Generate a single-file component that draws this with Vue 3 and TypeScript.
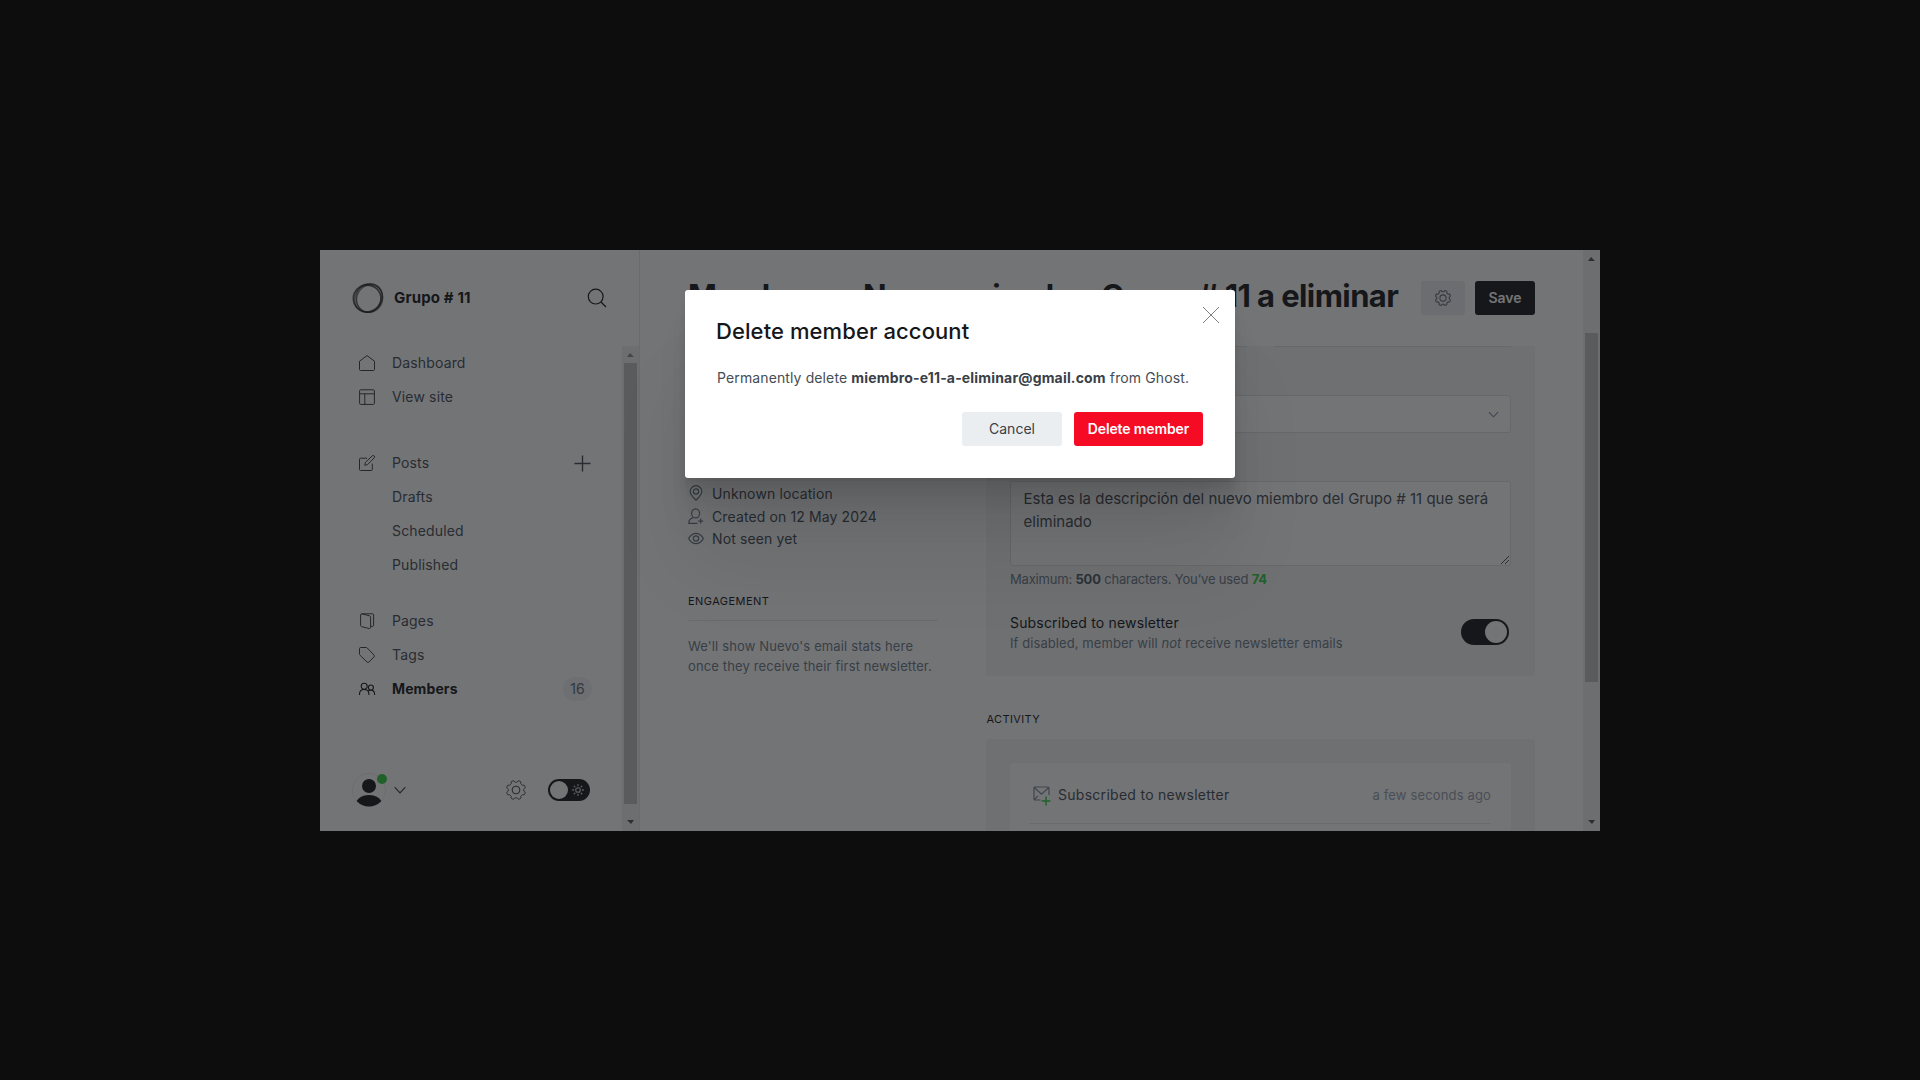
<script setup lang="ts">
interface NavItem { label: string; icon?: string; active?: boolean; plus?: boolean; badge?: string }
const groups: NavItem[][] = [
  [{ label: 'Dashboard', icon: 'home' }, { label: 'View site', icon: 'site' }],
  [{ label: 'Posts', icon: 'posts', plus: true }, { label: 'Drafts' }, { label: 'Scheduled' }, { label: 'Published' }],
  [{ label: 'Pages', icon: 'pages' }, { label: 'Tags', icon: 'tags' }, { label: 'Members', icon: 'members', active: true, badge: '16' }],
]
const icons: Record<string, string> = {
  home: 'M.5 6.2v8.3c0 .6.4 1 1 1h13c.6 0 1-.4 1-1V6.2L8 .6z',
  site: 'M1.5.8h13c.5 0 .9.4.9.9v12.8c0 .5-.4.9-.9.9h-13a.9.9 0 0 1-.9-.9V1.7c0-.5.4-.9.9-.9zM.6 4.8h14.8M5.8 4.8v10.6',
  posts: 'M8 3.2H1.5a1 1 0 0 0-1 1v10.3a1 1 0 0 0 1 1h10.8a1 1 0 0 0 1-1V8.6M5.8 10.3l.6-2.9L13.2.9a1.4 1.4 0 0 1 2 2L8.6 9.6z',
  pages: 'M2.8.8h10.6c.7 0 1.2.5 1.2 1.2v10.2c0 .7-.5 1.2-1.2 1.2h-1.6M2.8.8c-.8 0-1.2.5-1.2 1.2v10.4c0 .6.3 1 .9 1.2l7.5 1.9c.9.2 1.6-.2 1.6-1.1V4.2c0-.7-.4-1.2-1.1-1.4z',
  tags: 'M1.6.5h5.5c.5 0 .9.2 1.2.5l6.700 7.100a1.300 1.300 0 0 1 0 1.800l-5.100 5.200a1.300 1.300 0 0 1-1.800 0L1.100 8.300a2 2 0 0 1-.6-1.400V1.600c0-.6.5-1.100 1.100-1.100z',
  members: 'M5.200 8.300a3 3 0 1 0 0-6 3 3 0 0 0 0 6zM.5 14v-.8C.5 10.400 2.500 8.500 5.200 8.500s4.700 1.900 4.700 4.700v.8M11.900 9a2.500 2.500 0 1 0 0-5 2.500 2.500 0 0 0 0 5zM9.400 9.900c.6-.5 1.500-.8 2.400-.8 2.200 0 3.800 1.600 3.800 4.300v.6',
}
const gear = (() => {
  const pts: string[] = []
  const n = 160
  for (let i = 0; i < n; i++) {
    const a = (i / n) * Math.PI * 2
    const k = Math.tanh(2.6 * Math.cos(8 * a + Math.PI))
    const r = 8.7 + 0.95 * k
    pts.push(`${(10 + r * Math.cos(a)).toFixed(2)} ${(10 + r * Math.sin(a)).toFixed(2)}`)
  }
  return `M${pts.join('L')}Z`
})()
const rays = Array.from({ length: 8 }, (_, i) => i * 45)
</script>

<template>
  <div class="stage">
    <div class="window">
      <aside class="sidebar">
        <header class="brand">
          <svg class="logo" viewBox="0 0 32 32" fill="none" stroke="#15171a">
            <ellipse cx="15.200" cy="16.600" rx="13.800" ry="13.600" stroke-width="1.800" opacity=".7" />
            <ellipse cx="17.600" cy="15.600" rx="12.600" ry="14.200" stroke-width="1.300" opacity=".55" transform="rotate(30 16 16)" />
            <ellipse cx="16.400" cy="16.200" rx="14.900" ry="12.800" stroke-width="1.500" opacity=".45" transform="rotate(-50 16 16)" />
            <ellipse cx="17.400" cy="16" rx="13.300" ry="14.400" stroke-width="1.300" opacity=".4" />
          </svg>
          <b>Grupo # 11</b>
          <svg class="search" viewBox="0 0 20 20" fill="none" stroke="#15171a" stroke-width="1.200"><circle cx="8.700" cy="8.600" r="7.400" /><path d="M14 14l5 5" /></svg>
        </header>
        <div class="side-body">
          <div class="side-main">
            <nav>
              <ul v-for="(g, gi) in groups" :key="gi">
                <li v-for="it in g" :key="it.label" :class="{ active: it.active }">
                  <span class="ico"><svg v-if="it.icon" viewBox="0 0 16 16"><path :d="icons[it.icon]" /></svg></span>
                  <span class="label">{{ it.label }}</span>
                  <svg v-if="it.plus" class="plus" viewBox="0 0 18 18"><path d="M9 .5v17M.5 9h17" /></svg>
                  <span v-if="it.badge" class="badge">{{ it.badge }}</span>
                </li>
              </ul>
            </nav>
            <footer class="foot">
              <div class="me">
                <svg viewBox="0 0 34 34"><defs><clipPath id="me"><circle cx="17" cy="17" r="16.500" /></clipPath></defs><circle cx="17" cy="17" r="16.500" fill="#fff" stroke="#e6e9eb" stroke-width=".8" /><g clip-path="url(#me)" fill="#15171a"><circle cx="17" cy="13" r="7" /><ellipse cx="17" cy="33" rx="14" ry="11" /></g></svg>
                <i class="dot"></i>
              </div>
              <svg class="chev" viewBox="0 0 12 8"><path d="M.6 1.200L6 6.800l5.400-5.600" /></svg>
              <svg class="gear" viewBox="0 0 20 20"><path :d="gear" /><circle cx="10" cy="10" r="3.900" /></svg>
              <div class="night">
                <i></i>
                <svg viewBox="0 0 12 12" fill="none" stroke="#fff" stroke-linecap="round"><circle cx="6" cy="6" r="2.300" stroke-width="1.100" /><path v-for="r in rays" :key="r" d="M6 .7v.9" stroke-width="1.300" :transform="`rotate(${r} 6 6)`" /></svg>
              </div>
            </footer>
          </div>
          <div class="bar side-bar"><i class="arr up off"></i><i class="thumb"></i><i class="arr down"></i></div>
        </div>
      </aside>

      <main>
        <header class="top">
          <h1><span>Member</span>Nuevo miembro Grupo # 11 a eliminar</h1>
          <button class="cog"><svg viewBox="0 0 20 20"><path :d="gear" /><circle cx="10" cy="10" r="3.900" /></svg></button>
          <button class="save">Save</button>
        </header>
        <div class="cols">
          <section class="info">
            <div class="avatar-row"><div class="avatar"></div></div>
            <p><svg viewBox="0 0 16 16"><path d="M8 15.200C5 12.200 2.200 9.700 2.200 6.400a5.800 5.800 0 0 1 11.600 0c0 3.300-2.800 5.800-5.800 8.800z" /><circle cx="8" cy="6.500" r="2.600" /></svg>Unknown location</p>
            <p><svg viewBox="0 0 16 16"><path d="M9.500 15.400H.8c0-3.600 1-4.900 4.200-5.800M9.300 9.400l1 .4M12.700 10.600v5M10.200 13.100h5" /><ellipse cx="7.600" cy="5.400" rx="4" ry="4.500" /></svg>Created on 12 May 2024</p>
            <p><svg viewBox="0 0 16 16"><path d="M.6 8.500C2.300 5.500 4.900 3.300 8 3.300s5.700 2.200 7.400 5.200c-1.700 3-4.300 5.200-7.400 5.200S2.300 11.500.6 8.500z" /><circle cx="8" cy="8.500" r="2.600" /></svg>Not seen yet</p>
            <h4>Engagement</h4>
            <div class="stats">We'll show Nuevo's email stats here<br>once they receive their first newsletter.</div>
          </section>
          <section class="details">
            <div class="panel">
              <div class="inputs"><i></i><i></i></div>
              <div class="select"><svg viewBox="0 0 12 8"><path d="M.8 1.200L6 6.600l5.200-5.400" /></svg></div>
              <div class="area">Esta es la descripción del nuevo miembro del Grupo # 11 que será eliminado
                <svg viewBox="0 0 8 8"><path d="M0 8L8 0M4 8l4-4" /></svg>
              </div>
              <div class="hint">Maximum: <b>500</b> characters. You’ve used <b class="ok">74</b></div>
              <div class="sub">
                <div><strong>Subscribed to newsletter</strong><span>If disabled, member will <em>not</em> receive newsletter emails</span></div>
                <div class="switch"><i></i></div>
              </div>
            </div>
            <h4>Activity</h4>
            <div class="panel feed">
              <div class="card">
                <div class="event">
                  <svg viewBox="0 0 18 20"><path d="M7.500 14H2a1 1 0 0 1-1-1V2a1 1 0 0 1 1-1h13a1 1 0 0 1 1 1v7M1.500 1.700L8.500 8.300l7-6.600M1.500 13.500L5 9.800" /><path class="add" d="M13 10.500v9M8.600 15h8.800" /></svg>
                  <span>Subscribed to newsletter</span><time>a few seconds ago</time>
                </div>
              </div>
            </div>
          </section>
        </div>
      </main>
      <div class="bar main-bar"><i class="arr up"></i><i class="thumb"></i><i class="arr down"></i></div>

      <div class="overlay">
        <div class="modal">
          <svg class="close" viewBox="0 0 16 16"><path d="M0 0l16 16M16 0L0 16" /></svg>
          <h2>Delete member account</h2>
          <p>Permanently delete <b>miembro-e11-a-eliminar@gmail.com</b> from Ghost.</p>
          <div class="actions"><button class="cancel">Cancel</button><button class="del">Delete member</button></div>
        </div>
      </div>
    </div>
  </div>
</template>

<style>
body { margin: 0; background: #0d0d0d; }
</style>
<style scoped>
* { box-sizing: border-box; }
h1, h2, h4, p, ul { margin: 0; padding: 0; font-weight: 400; }
i { display: block; font-style: normal; }
svg { display: block; flex: none; overflow: visible; }
button { border: 0; padding: 0 0 2px; font: inherit; border-radius: 3px; display: flex; align-items: center; justify-content: center; flex: none; }
.stage { width: 1920px; height: 1080px; background: #0d0d0d; padding: 250px 320px; font-family: Inter, "Liberation Sans", sans-serif; font-size: 14px; letter-spacing: .15px; color: #454d55; }
.window { position: relative; width: 1280px; height: 581px; background: #fff; display: flex; overflow: hidden; }

.sidebar { width: 320px; border-right: 1px solid #e6e9eb; display: flex; flex-direction: column; flex: none; }
.brand { height: 96px; flex: none; display: flex; align-items: center; padding: 0 32px 1px; }
.logo { width: 32px; height: 32px; margin-right: 10px; }
.brand b { flex: 1; font-size: 15px; font-weight: 700; color: #15171a; }
.search { width: 20px; height: 20px; }
.side-body { flex: 1; display: flex; min-height: 0; }
.side-main { flex: 1; display: flex; flex-direction: column; justify-content: space-between; }
ul { list-style: none; }
ul:nth-child(2) { margin-top: 32px; }
ul:nth-child(3) { margin-top: 22px; }
li { height: 34px; display: flex; align-items: center; padding-left: 39px; padding-right: 30px; }
.ico { width: 33px; }
.ico svg { width: 16px; height: 16px; }
.ico path, .plus path, .chev path, .gear, .cog svg { fill: none; stroke: #394047; stroke-width: 1; }
.label { flex: 1; padding-bottom: 2px; }
.active { font-weight: 700; color: #15171a; letter-spacing: .1px; }
.active path { stroke: #15171a; stroke-width: 1.100; }
.plus { width: 17px; height: 17px; margin-right: 1.500px; }
.plus path { stroke-width: 1.500; stroke: #454d55; }
.badge { width: 29px; height: 24px; border-radius: 12px; background: #f0f2f4; color: #5d6a78; font-weight: 400; line-height: 23px; text-align: center; }
.foot { display: flex; align-items: center; height: 34px; margin-bottom: 24px; padding: 0 32px; }
.me { position: relative; width: 34px; height: 34px; }
.me svg { width: 34px; height: 34px; }
.dot { position: absolute; left: 25px; top: 1px; width: 10px; height: 10px; border-radius: 50%; background: #30cf43; }
.chev { width: 12px; height: 8px; margin-left: 8px; }
.chev path { stroke-width: 1.200; }
.gear { width: 20px; height: 20px; margin-left: 100px; }
.night { width: 42px; height: 22px; margin-left: 22px; border-radius: 11px; background: #15171a; display: flex; align-items: center; padding: 0 6px 0 2px; justify-content: space-between; }
.night i { width: 18px; height: 18px; border-radius: 50%; background: #fff; }
.night svg { width: 12px; height: 12px; opacity: .8; }

.bar { width: 17px; background: #f1f1f1; flex: none; display: flex; flex-direction: column; align-items: center; }
.thumb { width: 13px; background: #c1c1c1; }
.arr { width: 17px; height: 17px; display: flex; align-items: center; justify-content: center; flex: none; }
.arr::after { content: ""; border: 3.500px solid transparent; border-width: 0 4px 4px 3px; border-bottom: 4px solid #505050; }
.arr.down { padding-bottom: 1px; }
.arr.down::after { transform: rotate(180deg); }
.arr.off::after { border-bottom-color: #8d8d8d; }
.side-bar .thumb { height: 441px; }
.side-bar .down { margin-top: auto; }
.main-bar .thumb { height: 349px; margin-top: 66px; }
.main-bar .down { margin-top: auto; }

main { flex: 1; padding: 0 48px; min-width: 0; }
.top { height: 96px; display: flex; align-items: center; padding-bottom: 0; }
h1 { flex: 1; font-size: 31px; font-weight: 700; letter-spacing: -.6px; color: #15171a; white-space: nowrap; line-height: 38px; padding-bottom: 4px; }
h1 span { display: inline-block; width: 175px; }
.cog { width: 44px; height: 34px; background: #ebeef0; margin-right: 10px; padding: 0; }
.cog svg { width: 16px; height: 16px; stroke: #5d666f; stroke-width: 1.300; }
.save { width: 60px; height: 34px; background: #15171a; color: #fff; font-weight: 600; letter-spacing: 0; }
.cols { display: flex; justify-content: space-between; }
.info { width: 250px; }
.avatar-row { height: 137px; padding-top: 24px; }
.avatar { width: 72px; height: 72px; margin-left: -3.500px; border-radius: 50%; background: #0a8cff; }
.info p { height: 22.500px; display: flex; align-items: center; white-space: nowrap; padding-bottom: 1px; letter-spacing: .12px; }
.info p svg { width: 16px; height: 16px; margin-right: 8px; fill: none; stroke: #6a7784; stroke-width: 1.200; position: relative; top: -.5px; }
h4 { font-size: 11px; font-weight: 400; color: #15171a; text-transform: uppercase; letter-spacing: .45px; line-height: 20px; }
.info h4 { margin-top: 40.500px; padding-bottom: 9px; border-bottom: 1px solid #e6e9eb; }
.stats { padding-top: 15px; font-size: 13px; line-height: 20px; color: #6c7a88; white-space: nowrap; letter-spacing: .13px; }
.details { width: 549px; }
.panel { background: #f4f5f6; border-radius: 0 0 3px 3px; padding: 0 24px; height: 330px; }
.inputs { display: flex; justify-content: space-between; height: 49px; }
.inputs i { width: 237px; height: 1px; background: #dde1e5; }
.select { height: 38px; background: #fff; border: 1px solid #dde1e5; border-radius: 3px; display: flex; align-items: center; justify-content: flex-end; padding-right: 11px; }
.select svg { width: 11px; height: 7px; fill: none; stroke: #7c8b9a; stroke-width: 1.300; }
.area { position: relative; height: 85px; margin-top: 48px; padding: 5px 12px 5px 12.500px; background: #fff; border: 1px solid #dde1e5; border-radius: 3px; font-size: 15px; line-height: 23px; letter-spacing: 0; }
.area svg { position: absolute; right: 1px; bottom: 1px; width: 8px; height: 8px; stroke: #394047; stroke-width: .9; }
.hint { margin-top: 3px; font-size: 13px; line-height: 20px; color: #6c7a88; letter-spacing: -.19px; }
.hint b { color: #4f5a66; font-weight: 700; }
.hint .ok { color: #30cf43; }
.sub { display: flex; justify-content: space-between; align-items: center; margin-top: 23px; padding-right: 2px; }
.sub strong { display: block; font-weight: 400; color: #15171a; line-height: 21px; letter-spacing: .17px; }
.sub span { display: block; font-size: 13px; line-height: 20px; color: #6c7a88; letter-spacing: .08px; }
.switch { width: 48px; height: 26px; border-radius: 13px; background: #15171a; padding: 2px; display: flex; justify-content: flex-end; position: relative; top: -1px; }
.switch i { width: 22px; height: 22px; border-radius: 50%; background: #fff; }
.details h4 { margin-top: 32.500px; height: 30.500px; letter-spacing: .36px; padding-left: .5px; }
.feed { height: 120px; padding-top: 24px; border-radius: 3px; }
.card { background: #fff; height: 96px; border-radius: 3px; padding: 0 20px 0 19px; }
.event { height: 61px; border-bottom: 1px solid #e6e9eb; display: flex; align-items: center; padding-top: 3px; }
.event svg { width: 18px; height: 20px; margin: 3px 7px 0 4px; fill: none; stroke: #7c8b9a; stroke-width: 1.200; }
.event .add { stroke: #30cf43; stroke-width: 1.500; }
.event span { flex: 1; letter-spacing: .28px; }
.event time { font-size: 13px; color: #98a3ae; letter-spacing: .15px; }

.overlay { position: absolute; inset: 0; background: rgba(21, 23, 26, .6); display: flex; justify-content: center; align-items: flex-start; padding-top: 40px; }
.modal { position: relative; width: 550px; height: 188px; background: #fff; border-radius: 3px; padding: 28px 32px; box-shadow: 0 2.800px 2.200px rgba(0, 0, 0, .02), 0 6.700px 5.300px rgba(0, 0, 0, .028), 0 12.500px 10px rgba(0, 0, 0, .035), 0 22.300px 17.900px rgba(0, 0, 0, .042), 0 41.800px 33.400px rgba(0, 0, 0, .05), 0 90px 80px rgba(0, 0, 0, .07); }
.close { position: absolute; right: 16px; top: 17px; width: 16px; height: 16px; stroke: #7f7f7f; stroke-width: 1; }
h2 { font-size: 22px; font-weight: 500; line-height: 26px; color: #15171a; letter-spacing: .09px; margin-left: -1px; }
.modal p { margin-top: 24px; line-height: 20px; white-space: nowrap; letter-spacing: .12px; }
.modal p b { font-weight: 700; letter-spacing: .17px; color: #394047; }
.actions { display: flex; justify-content: flex-end; gap: 12px; margin-top: 24px; }
.cancel { width: 100px; height: 34px; background: #ebeef0; color: #394047; }
.del { width: 129px; height: 34px; background: #f50b23; color: #fff; font-weight: 600; letter-spacing: -.12px; }
</style>
